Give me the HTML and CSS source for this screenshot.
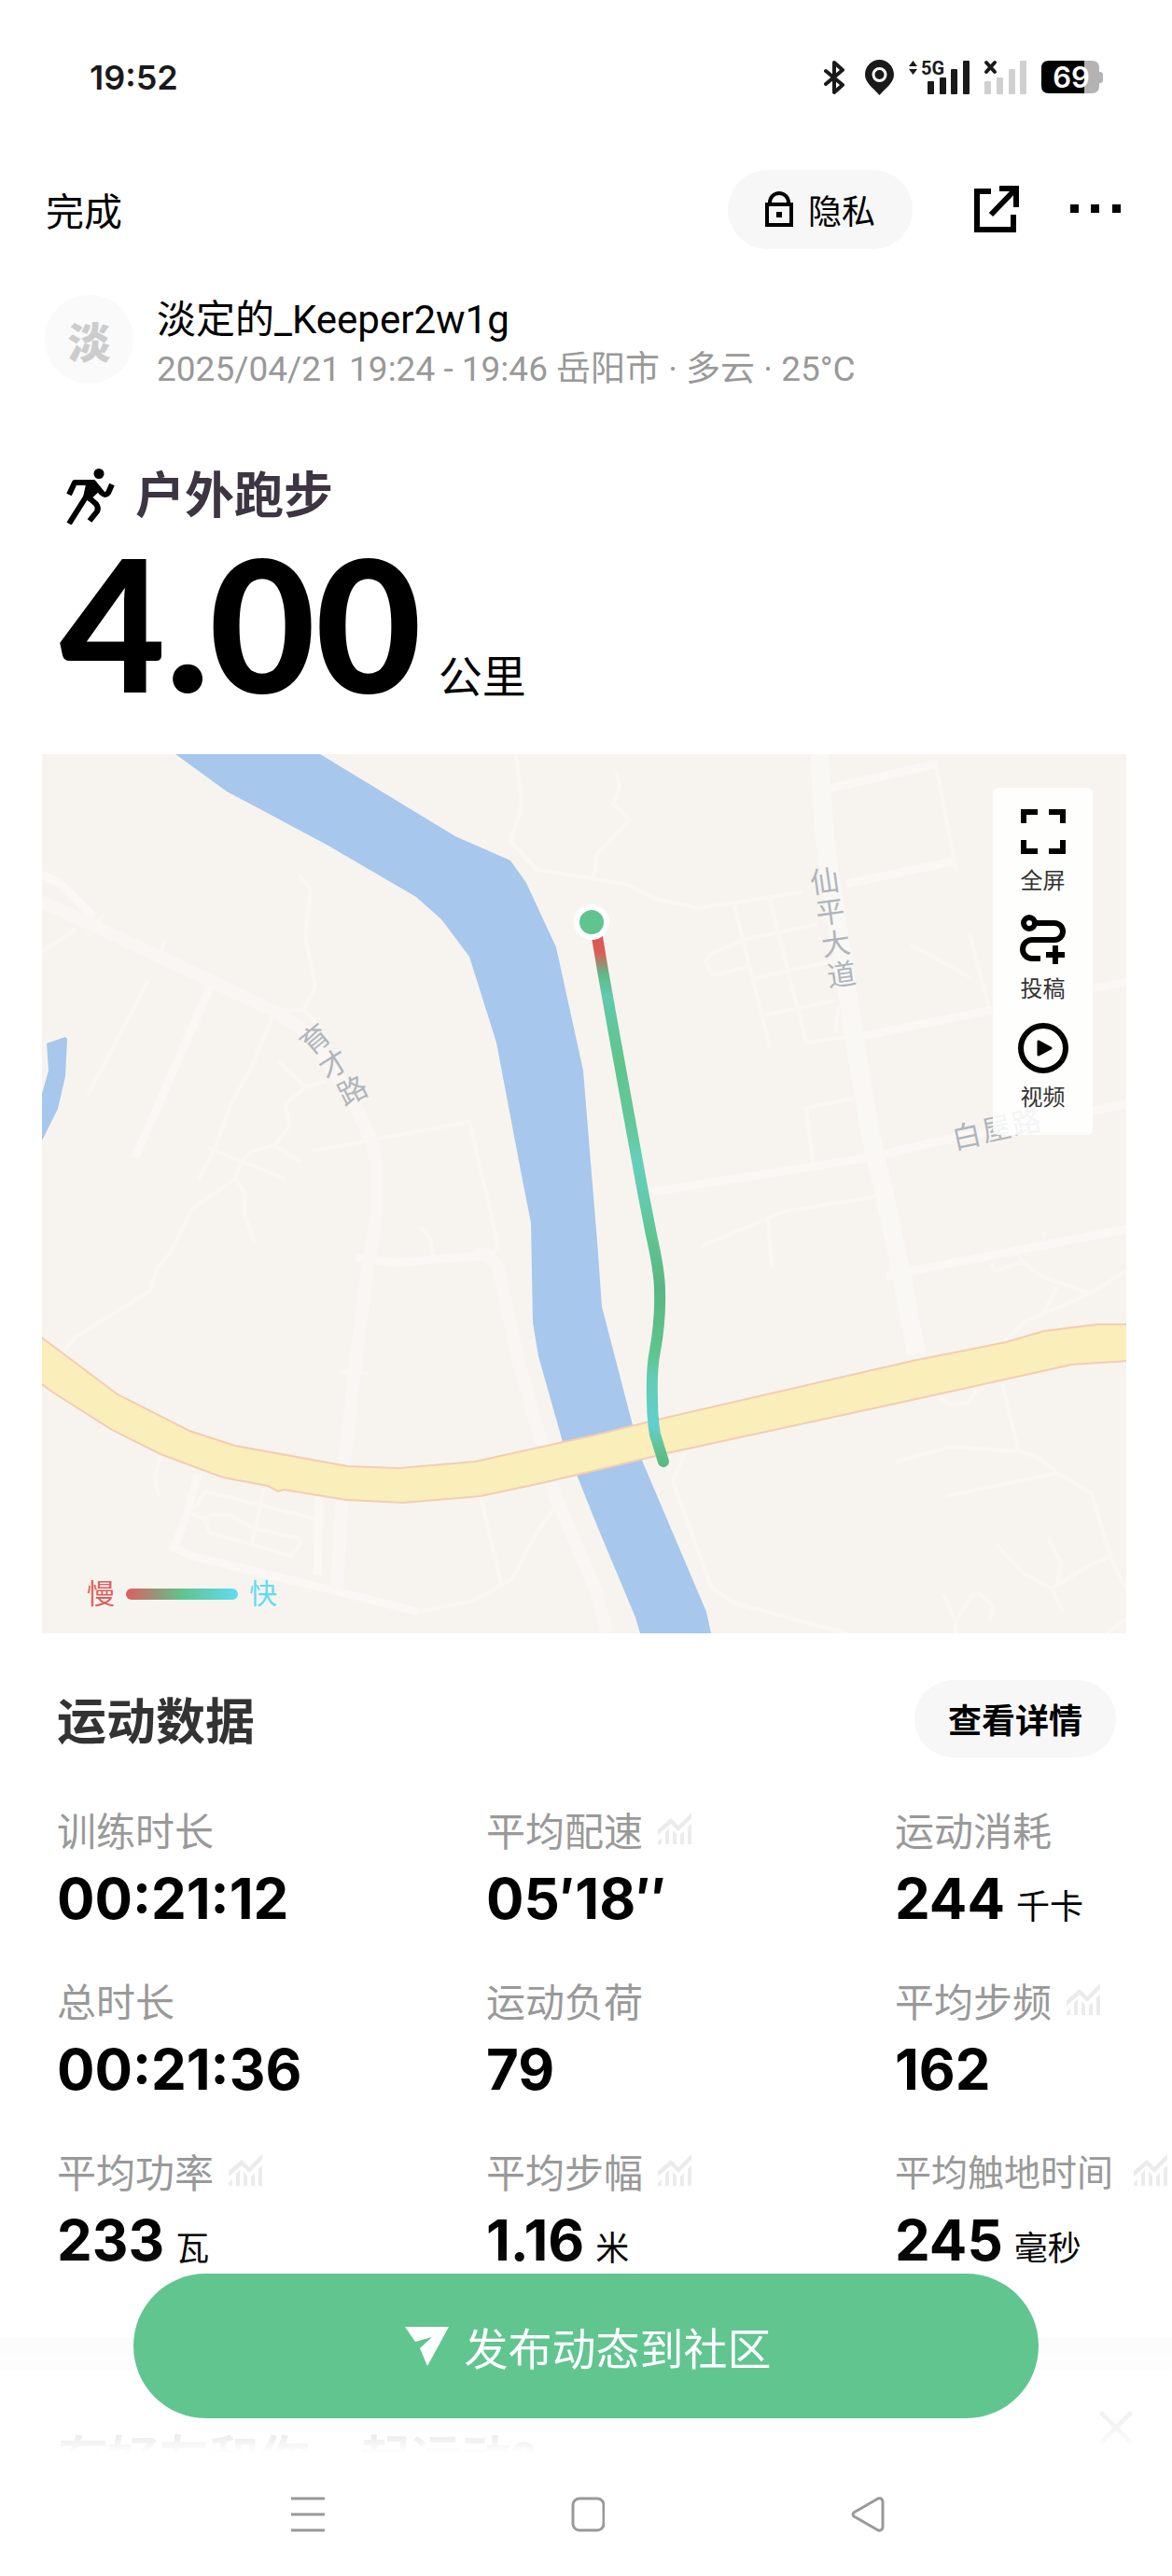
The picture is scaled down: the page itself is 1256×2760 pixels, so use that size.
FILE: index.html
```html
<!DOCTYPE html>
<html lang="zh-CN">
<head>
    <meta charset="UTF-8">
    <meta name="viewport" content="width=device-width, initial-scale=1.0">
    <title>户外跑步</title>
    <link rel="stylesheet" href="styles.css">
</head>
<body>
    <svg class="sprite" aria-hidden="true">
        <symbol id="trend" viewBox="0 0 36 34">
            <path d="M0 18 14 6l8 8L36 0v6L22 20l-8-8L0 24z"/>
            <path d="M0 34v-3l4-4v7zM8 34V21l4-4v17zM16 34V19l4 4v11zM24 34V24l4-4v14zM32 34V16l4-4v22z"/>
        </symbol>
    </svg>

    <div class="status-bar">
        <span class="clock">19:52</span>
        <div class="status-icons">
            <svg class="bluetooth" width="22" height="38" viewBox="0 0 22 38" fill="none" stroke="#1a1a1a" stroke-width="4" stroke-linejoin="round" stroke-linecap="round">
                <path d="M2 12 20 27 11 35V3l9 8L2 26"/>
            </svg>
            <svg class="location" width="31" height="38" viewBox="0 0 31 38">
                <path fill="#1a1a1a" d="M15.500 0C7 0 0 7 0 16c0 9 9 14 15.500 22C22 30 31 25 31 16 31 7 24 0 15.500 0z"/>
                <circle cx="15.500" cy="16" r="6.500" fill="#1a1a1a" stroke="#fff" stroke-width="3"/>
            </svg>
            <svg class="signal" width="66" height="38" viewBox="0 0 66 38" fill="#1a1a1a">
                <path d="M0 7 4.500 1 9 7zM0 10h9l-4.500 6z"/>
                <text class="network" x="13" y="16">5G</text>
                <rect x="20" y="23" width="7" height="14" rx="1"/>
                <rect x="33" y="19" width="7" height="18" rx="1"/>
                <rect x="45" y="10" width="7" height="27" rx="1"/>
                <rect x="58" y="1" width="7" height="36" rx="1"/>
            </svg>
            <svg class="signal" width="46" height="38" viewBox="0 0 46 38" fill="#d0d0d0">
                <path d="m2 3 9 10M11 3 2 13" stroke="#1a1a1a" stroke-width="4" stroke-linecap="round"/>
                <rect x="0" y="23" width="7" height="14" rx="1"/>
                <rect x="13" y="19" width="7" height="18" rx="1"/>
                <rect x="26" y="10" width="7" height="27" rx="1"/>
                <rect x="38" y="1" width="7" height="36" rx="1"/>
            </svg>
            <svg width="66" height="36" viewBox="0 0 66 36">
                <path fill="#b3b3b3" d="M46 0h8q8 0 8 8v4h1q3 0 3 3v6q0 3-3 3h-1v3q0 8-8 8h-8z"/>
                <path fill="#000" d="M8 0h38v35H8q-8 0-8-8V8q0-8 8-8z"/>
                <text class="battery" x="32" y="29" text-anchor="middle">69</text>
            </svg>
        </div>
    </div>

    <header class="top-nav">
        <button class="done">完成</button>
        <div class="top-actions">
            <button class="pill privacy">
                <svg width="30" height="38" viewBox="0 0 30 38" fill="none" stroke="#000" stroke-width="4">
                    <path d="M2 14h26v22H2zM5 14v-2a10 10 0 0 1 20 0v2"/>
                    <path fill="#000" stroke="none" d="M12 22h6v6h-6z"/>
                </svg>
                隐私
            </button>
            <button class="icon-btn share" aria-label="分享">
                <svg width="48" height="50" viewBox="0 0 48 50" fill="none" stroke="#000" stroke-width="6">
                    <path d="M18 6H3v41h39V31M27 3h18v20M44 4 18 31"/>
                </svg>
            </button>
            <button class="icon-btn" aria-label="更多">
                <svg width="54" height="10" viewBox="0 0 54 10">
                    <path d="M0 0h9v9H0zM22 0h9v9h-9zM45 0h9v9h-9z"/>
                </svg>
            </button>
        </div>
    </header>

    <section class="user">
        <div class="avatar">淡</div>
        <div class="user-info">
            <div class="user-name">淡定的_Keeper2w1g</div>
            <div class="user-meta">2025/04/21 19:24 - 19:46 岳阳市 · 多云 · 25°C</div>
        </div>
    </section>

    <section class="summary">
        <h1>
            <svg width="52" height="60" viewBox="0 0 52 60" fill="none" stroke="#000" stroke-width="6">
                <circle cx="35" cy="5.500" r="5.500" fill="#000" stroke="none"/>
                <path d="M3 28 9 15h20l9 11q4 4 7 0l4-9" stroke-linejoin="round"/>
                <path d="M22 12h8l7 11-13 12-6-4z" fill="#000" stroke="none"/>
                <path d="M22 29 3 59"/>
                <path d="m24 31 8 7q3 4 1 8l-8 10" stroke-linejoin="round"/>
            </svg>
            户外跑步
        </h1>
        <div class="distance"><strong>4.00</strong><span>公里</span></div>
    </section>

    <section class="map">
        <svg class="map-canvas" viewBox="0 0 1162 942">
            <defs>
                <linearGradient id="pace" gradientUnits="userSpaceOnUse" x1="0" y1="190" x2="0" y2="760">
                    <stop offset="0" stop-color="#e0524f"/>
                    <stop offset=".04" stop-color="#d95f58"/>
                    <stop offset=".08" stop-color="#5eb987"/>
                    <stop offset=".12" stop-color="#62c9ad"/>
                    <stop offset=".24" stop-color="#5fc58c"/>
                    <stop offset=".38" stop-color="#63c99f"/>
                    <stop offset=".43" stop-color="#66cfbc"/>
                    <stop offset=".5" stop-color="#62cbad"/>
                    <stop offset=".58" stop-color="#5fc48f"/>
                    <stop offset=".67" stop-color="#5bb683"/>
                    <stop offset=".79" stop-color="#5fc48c"/>
                    <stop offset=".84" stop-color="#63ccb4"/>
                    <stop offset=".93" stop-color="#62cfcd"/>
                    <stop offset=".97" stop-color="#5fc492"/>
                    <stop offset="1" stop-color="#5bb985"/>
                </linearGradient>
            </defs>

            <!-- lanes -->
            <g class="lane">
                <path d="M114 242 81 305 49 365M37 187 0 212M66 172 50 195M132 200 122 224"/>
                <path d="M276 130l12 14-6 51 11 54-13 25-31 1M280 274l20 20M248 279l-23 55-21 38-20 53-17 32"/>
                <path d="M253 329l29 28 23-7M282 357l-21 18 4 24-16 20-24 6-12 14-6 16-46 32-24 48-14 17-7 23-81 50-11 15"/>
                <path d="M178 422l83 33M249 419l28 18M207 455l10 14v23l11 32"/>
                <path d="M290 425l168-31 23 98 8 37-6 6M406 507l10 12 4 21M320 662l30 2"/>
                <path d="M127 752l-6 23 4 20M163 809l12-19 50 12 70 18M238 787l-13 58"/>
                <path d="M156 812l19 8 4 14 88 25 11-14-4-5-49-11-23-14h-20l-7 5"/>
                <path d="M403 919l59-12 42-23 27-52 23-30M470 795l22 94"/>
                <path d="M508 0l6 55-12 39 29 30 64 10 29 5 34 16 45 10 112-17M615 20l4 15-7 19 18 16-35 37-4 27"/>
                <path d="M958 12l20 103 2 10M742 162l38 153M780 155l39 154M831 182l-79 17-35 15-6 8 8 15 41-10"/>
                <path d="M764 240l82-18M772 280l78-16M819 309l51-7M854 269l-4 30"/>
                <path d="M931 204l65 36M994 192l21 80M870 369l-51 10 8 66"/>
                <path d="M707 527l88-37 99-16M778 499l4 51M915 552l20-2"/>
                <path d="M1043 530l8 14 21 16 51 18 39-24M1123 578l-68 29-24 22M1088 570l-14 27M1051 544l-30 10-4-7M1074 519v-8"/>
                <path d="M962 689l12 8 18-2 10-13M1029 675l18 72-73-5-59 16M1047 747l21 7 20 16 37 22 20 68 17 35M1088 770l-118 25"/>
                <path d="M1145 860l-22 9-41 25-31-17-28-30M1082 894l12 25M1078 840l14 25-4 24"/>
                <path d="M966 900l13 29v13M979 929l17-27 8-3 15 13-3 17M1140 942l22-15"/>
                <path d="M689 749l-13 30 41 113 23 17 122 33"/>
            </g>
            <g class="street">
                <path d="M0 129l20 10 36 36M182 245l-82 187M336 539l42 6 95-8"/>
                <path d="M167 772l-11 40-14 38 18 9 168 41 75 19M297 795l-2 84"/>
                <path d="M862 139l114-24M654 469l234-37 72-17 202-40M835 39l125-29M870 304l149-30 143-30M905 559l257-50"/>
            </g>
            <g class="avenue">
                <path d="M0 158l58 27 121 57 69 33 38 24 46 70 21 45 6 28v50l-10 60-14 110-11 100-8 133"/>
                <path d="M465 536h12l12 13 21 100 21 73 19 73 45 104 10 43"/>
            </g>
            <path class="boulevard" d="M833 0l6 92 31 210 18 107 15 63 18 85 16 85"/>

            <path class="water" d="M143 0l55 40 107 57 96 56 27 24 30 40 29 92 29 153 8 40 2 107 6 36 26 92 15 35 22 55 41 98 5 17h76l-5-23-68-160-11-40-33-127-5-70-5-60-10-123-29-132-32-69-17-24-59-26L298 0z"/>
            <path class="water" d="M5 310l20-7 2 2-2 40-8 35-17 34v-50l7-25z"/>
            <path class="highway" d="M-3 623L81 686l77 39 49 16 121 22 54 2 82-7 131-29 69-17 269-62 100-20 41-12 57-7h34v39l-61 4-167 37-267 58-75 18-55 13-70 15-83 7-61-3-67-11-6 2-11-6-48-9-67-25-52-26-63-40-15-11z"/>

            <g class="road-name">
                <text transform="translate(293 306) rotate(-40)">育</text>
                <text transform="translate(313 333) rotate(-32)">才</text>
                <text transform="translate(333 361) rotate(-27)">路</text>
                <text transform="translate(839 137) rotate(-8)">仙</text>
                <text transform="translate(845 170) rotate(-8)">平</text>
                <text transform="translate(851 204) rotate(-8)">大</text>
                <text transform="translate(857 237) rotate(-8)">道</text>
                <text transform="translate(991 410) rotate(-12)">白</text>
                <text transform="translate(1023 402) rotate(-12)">屋</text>
                <text transform="translate(1055 395) rotate(-12)">路</text>
            </g>

            <path class="track" d="M594 190l7 42 12 67 12 66 19 104 9 46q9 40 9 60 1 31-5 64-4 20-3 53 0 20 3 37l9 29"/>
            <circle cx="589" cy="180" r="16" fill="#60c48e" stroke="#fff" stroke-width="6"/>
        </svg>

        <div class="map-tools">
            <button>
                <svg width="54" height="54" viewBox="0 0 54 54" fill="none" stroke="#000" stroke-width="6">
                    <path d="M6 18V6h15M33 6h15v12M48 36v12H33M21 48H6V36"/>
                </svg>
                全屏
            </button>
            <button>
                <svg width="54" height="54" viewBox="0 0 54 54" fill="none" stroke="#000" stroke-width="6">
                    <circle cx="12" cy="9" r="6"/>
                    <path d="M18 9h21a9 9 0 0 1 0 18H15a9 9 0 0 0 0 20h9"/>
                    <path d="M30 43h20M40 33v20"/>
                </svg>
                投稿
            </button>
            <button>
                <svg width="54" height="54" viewBox="0 0 54 54" fill="none" stroke="#000" stroke-width="6">
                    <circle cx="27" cy="27" r="24"/>
                    <path d="M22 20v14l13-7z" fill="#000" stroke-width="3" stroke-linejoin="round"/>
                </svg>
                视频
            </button>
        </div>

        <div class="legend">
            <span class="slow">慢</span>
            <span class="legend-bar"></span>
            <span class="fast">快</span>
        </div>
    </section>

    <section class="data">
        <div class="data-head">
            <h2>运动数据</h2>
            <button class="pill detail">查看详情</button>
        </div>
        <dl class="stats">
            <div class="stat">
                <dt>训练时长</dt>
                <dd>00:21:12</dd>
            </div>
            <div class="stat">
                <dt>平均配速 <svg class="trend"><use href="#trend"/></svg></dt>
                <dd>05′18″</dd>
            </div>
            <div class="stat">
                <dt>运动消耗</dt>
                <dd>244<span>千卡</span></dd>
            </div>
            <div class="stat">
                <dt>总时长</dt>
                <dd>00:21:36</dd>
            </div>
            <div class="stat">
                <dt>运动负荷</dt>
                <dd>79</dd>
            </div>
            <div class="stat">
                <dt>平均步频 <svg class="trend"><use href="#trend"/></svg></dt>
                <dd>162</dd>
            </div>
            <div class="stat">
                <dt>平均功率 <svg class="trend"><use href="#trend"/></svg></dt>
                <dd>233<span>瓦</span></dd>
            </div>
            <div class="stat">
                <dt>平均步幅 <svg class="trend"><use href="#trend"/></svg></dt>
                <dd>1.16<span>米</span></dd>
            </div>
            <div class="stat long">
                <dt>平均触地时间 <svg class="trend"><use href="#trend"/></svg></dt>
                <dd>245<span>毫秒</span></dd>
            </div>
        </dl>
    </section>

    <section class="friends">
        <h2>有好友和你一起运动?</h2>
        <button class="icon-btn close" aria-label="关闭">
            <svg width="36" height="36" viewBox="0 0 36 36" stroke="#999" stroke-width="5" stroke-linecap="round">
                <path d="m3 3 30 30M33 3 3 33"/>
            </svg>
        </button>
    </section>

    <footer class="dock">
        <div class="publish-area">
            <button class="publish">
                <svg width="47" height="42" viewBox="0 0 47 42" fill="#fff">
                    <path d="M0 0h47L24 42l-8-19 13-12-18 5z"/>
                </svg>
                发布动态到社区
            </button>
        </div>
        <nav class="system-nav">
            <button class="icon-btn" aria-label="菜单">
                <svg width="36" height="38" viewBox="0 0 36 38" stroke="#999" stroke-width="3">
                    <path d="M0 2h36M0 19h36M0 36h36"/>
                </svg>
            </button>
            <button class="icon-btn" aria-label="主页">
                <svg width="36" height="38" viewBox="0 0 36 38" fill="none" stroke="#999" stroke-width="3">
                    <rect x="2" y="2" width="33" height="34" rx="7"/>
                </svg>
            </button>
            <button class="icon-btn" aria-label="返回">
                <svg width="36" height="38" viewBox="0 0 36 38" fill="none" stroke="#999" stroke-width="3" stroke-linejoin="round">
                    <path d="M3 17 29 2q4-1 5 3v28q-1 4-5 3L3 21q-2-2 0-4z"/>
                </svg>
            </button>
        </nav>
    </footer>
</body>
</html>
```

FILE: styles.css
```css
* {
    box-sizing: border-box;
}

body {
    margin: 0;
    min-height: 100vh;
    overflow-x: hidden;
    background: #fff;
    color: #000;
    font-family: Roboto, 'Noto Sans CJK SC', sans-serif;
    font-size: 36px;
}

h1, h2, dl, dt, dd {
    margin: 0;
}

button {
    padding: 0;
    border: none;
    background: none;
    color: #000;
    font-family: inherit;
    cursor: pointer;
}

svg {
    display: block;
    flex: none;
}

.sprite {
    position: absolute;
    width: 0;
    height: 0;
}

/* status bar */
.status-bar {
    display: flex;
    justify-content: space-between;
    align-items: center;
    height: 166px;
    padding: 0 74px 0 96px;
}

.clock {
    font-family: Inter, sans-serif;
    font-size: 36px;
    font-weight: 600;
    color: #1a1a1a;
}

.status-icons {
    display: flex;
    align-items: center;
    gap: 15px;
}

.location {
    margin: 0 1px 0 7px;
}

.signal {
    overflow: visible;
}

.network {
    font-family: Roboto, sans-serif;
    font-size: 20px;
    font-weight: 700;
}

.battery {
    font-family: Inter, sans-serif;
    font-size: 31px;
    font-weight: 600;
    fill: #fff;
}

/* top navigation */
.top-nav {
    display: flex;
    justify-content: space-between;
    align-items: center;
    height: 116px;
    padding: 0 55px 0 49px;
}

.done {
    font-size: 41px;
}

.top-actions {
    display: flex;
    align-items: center;
}

.pill {
    border-radius: 50px;
    background: #f7f7f7;
    font-size: 36px;
}

.privacy {
    display: flex;
    align-items: center;
    gap: 16px;
    height: 85px;
    padding: 0 40px;
}

.share {
    margin: 0 55px 0 66px;
}

/* user */
.user {
    display: flex;
    gap: 25px;
    margin-top: 34px;
    padding: 0 48px;
}

.avatar {
    display: flex;
    flex: none;
    justify-content: center;
    align-items: center;
    width: 95px;
    height: 95px;
    border-radius: 50%;
    background: #fafafa;
    color: #ccc;
    font-size: 46px;
    font-weight: 900;
}

.user-name {
    font-size: 42px;
    line-height: 54px;
}

.user-meta {
    color: #999;
    font-size: 37px;
    line-height: 52px;
}

/* summary */
.summary {
    padding: 70px 64px 0;
}

.summary h1 {
    display: flex;
    align-items: center;
    gap: 22px;
    padding-left: 7px;
    color: #3d3542;
    font-size: 53px;
    line-height: 80px;
}

.distance {
    display: flex;
    align-items: baseline;
    gap: 18px;
    height: 236px;
}

.distance strong {
    font-family: Lato, sans-serif;
    font-size: 196px;
    font-weight: 900;
    line-height: 190px;
}

.distance span {
    font-size: 47px;
}

/* map */
.map {
    position: relative;
    margin: 0 49px 0 45px;
    background: #f7f4ef;
}

.map-canvas {
    width: 100%;
}

.lane, .street, .avenue, .boulevard {
    fill: none;
    stroke: #faf7f3;
    stroke-width: 4;
    stroke-linejoin: round;
}

.street {
    stroke: #faf7f4;
    stroke-width: 9;
}

.avenue {
    stroke: #f9f6f3;
    stroke-width: 14;
}

.boulevard {
    stroke: #f9f8f5;
    stroke-width: 20;
}

.water {
    fill: #a7c7ec;
}

.highway {
    fill: #faeeba;
    stroke: #f3cdb4;
    stroke-width: 2;
}

.road-name {
    fill: #b0b5bc;
    font-size: 31px;
    text-anchor: middle;
    dominant-baseline: central;
}

.track {
    fill: none;
    stroke: url(#pace);
    stroke-width: 12;
    stroke-linecap: round;
    stroke-linejoin: round;
}

.map-tools {
    position: absolute;
    top: 36px;
    right: 36px;
    display: flex;
    flex-direction: column;
    gap: 22px;
    padding: 20px 0 26px;
    border-radius: 6px;
    background: rgba(255, 255, 255, 0.85);
}

.map-tools button {
    display: flex;
    flex-direction: column;
    align-items: center;
    gap: 12px;
    width: 107px;
    color: #333;
    font-size: 24px;
    line-height: 28px;
}

.legend {
    position: absolute;
    left: 48px;
    bottom: 22px;
    display: flex;
    align-items: center;
    gap: 12px;
    font-size: 30px;
    line-height: 40px;
}

.legend-bar {
    width: 120px;
    height: 12px;
    border-radius: 6px;
    background: linear-gradient(90deg, #dd5f5d, #5fc48c 50%, #62dbf4);
}

.slow {
    color: #dd5f5d;
}

.fast {
    color: #62dbf4;
}

/* data */
.data {
    padding-left: 61px;
}

.data-head {
    display: flex;
    justify-content: space-between;
    align-items: center;
    height: 182px;
    padding-right: 60px;
}

.data-head h2 {
    color: #333;
    font-size: 53px;
}

.detail {
    height: 83px;
    padding: 0 36px;
    font-weight: 700;
}

.stats {
    display: grid;
    grid-template-columns: minmax(0, 460fr) minmax(0, 438fr) minmax(0, 297fr);
    row-gap: 41px;
}

.stat dt {
    display: flex;
    align-items: center;
    gap: 16px;
    height: 54px;
    margin-bottom: 8px;
    color: #999;
    font-size: 42px;
    white-space: nowrap;
}

.stat.long dt {
    gap: 22px;
    font-size: 39px;
}

.trend {
    width: 36px;
    height: 34px;
    fill: #ebebeb;
}

.stat dd {
    display: flex;
    align-items: baseline;
    gap: 12px;
    height: 80px;
    font-family: Inter, 'Noto Sans CJK SC', sans-serif;
    font-size: 60px;
    font-weight: 700;
    line-height: 80px;
}

.stat dd span {
    font-size: 36px;
    font-weight: 400;
}

/* friends, mostly hidden under the dock */
.friends {
    display: flex;
    justify-content: space-between;
    height: 220px;
    margin-top: 65px;
    padding: 43px 42px 0 62px;
    border-top: 35px solid #f5f5f5;
}

.friends h2 {
    padding-top: 14px;
    font-size: 54px;
    line-height: 80px;
}

.friends .close {
    height: 36px;
}

/* dock */
.dock {
    position: fixed;
    right: 0;
    bottom: 0;
    left: 0;
}

.publish-area {
    padding: 36px 143px 37px;
    background: linear-gradient(rgba(255, 255, 255, 0), rgba(255, 255, 255, 0.1) 20%, rgba(255, 255, 255, 0.7) 48%, rgba(255, 255, 255, 0.91) 90%, #fff);
}

.publish {
    display: flex;
    justify-content: center;
    align-items: center;
    gap: 17px;
    width: 100%;
    height: 155px;
    padding-left: 4px;
    border-radius: 78px;
    background: #61c590;
    color: #fff;
    font-size: 47px;
}

.system-nav {
    display: flex;
    justify-content: center;
    gap: 264px;
    padding: 47px 0 47px 4px;
    background: #fff;
}
```
